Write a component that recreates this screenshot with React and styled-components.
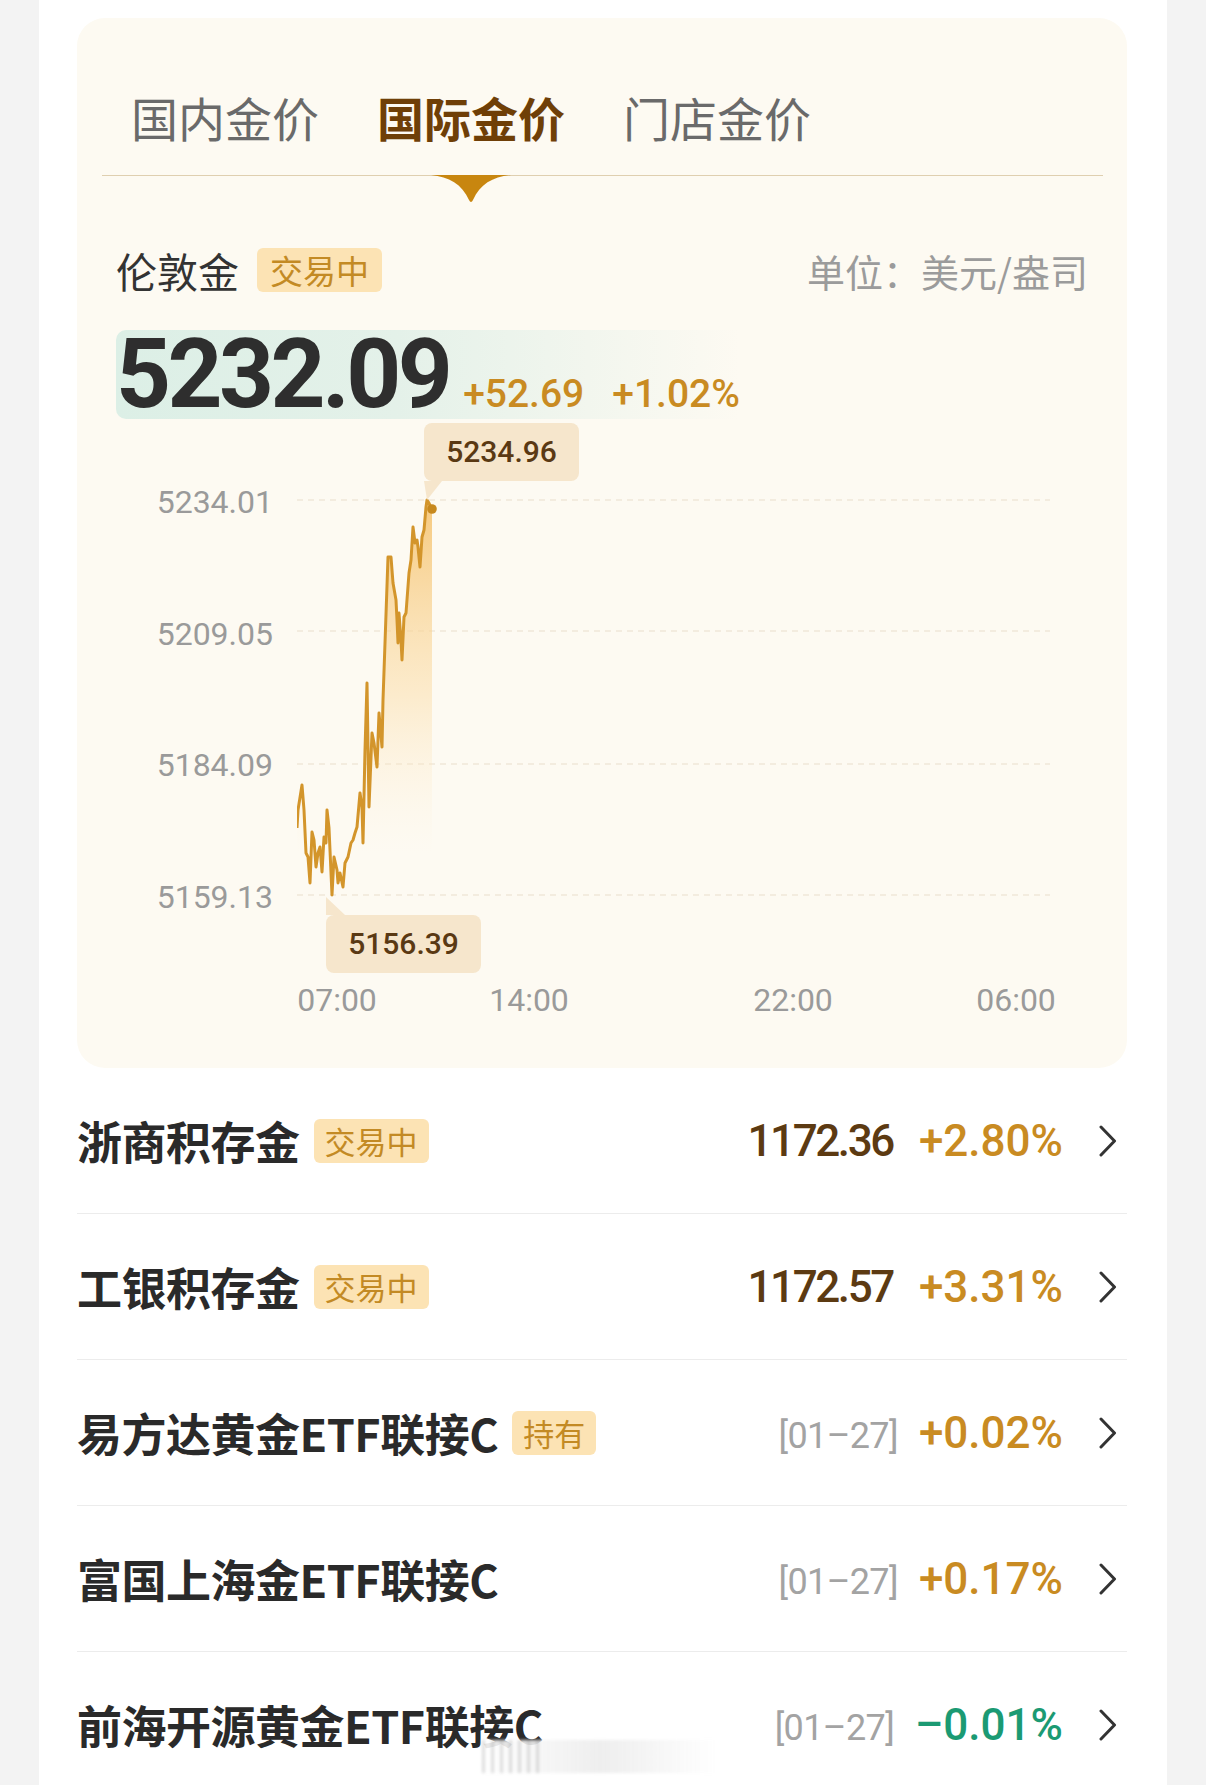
import React from 'react'
import styled, { createGlobalStyle } from 'styled-components'

const GlobalStyle = createGlobalStyle`
  html, body {
    margin: 0;
    padding: 0;
    background: #f3f3f3;
  }
  body {
    font-family: Roboto, "Noto Sans CJK SC", sans-serif;
  }
`

const CJK = `"Noto Sans CJK SC", "Noto Sans", sans-serif`
const NUM = `Roboto, "Noto Sans CJK SC", sans-serif`

// chart geometry (page coords -> plot coords)
const PX = 297
const PY = 419
const PLOT_W = 753
const PLOT_H = 560

const raw = [
  [297, 828], [298, 810], [302, 785], [304, 810], [306, 853], [308, 857], [310, 883],
  [312, 832], [314, 840], [316, 867], [318, 853], [320, 847], [322, 872], [324, 837],
  [326, 843], [327, 810], [329, 828], [332, 895], [334, 857], [337, 870], [338, 883],
  [340, 873], [343, 887], [345, 863], [348, 857], [351, 843], [353, 840], [355, 833],
  [357, 827], [360, 793], [362, 807], [363, 843], [365, 750], [367, 683], [369, 807],
  [372, 733], [374, 743], [377, 767], [379, 713], [382, 747], [383, 700], [385, 643],
  [388, 557], [391, 557], [393, 583], [396, 600], [397, 620], [398, 643], [399, 613],
  [401, 640], [402, 660], [404, 617], [406, 613], [409, 573], [411, 560], [413, 527],
  [415, 543], [417, 540], [418, 547], [420, 567], [422, 537], [424, 530], [426, 507],
  [427, 500], [429, 503], [432, 510],
]
const pts = raw.map(([x, y]) => [x - PX, y - PY])
const linePath = pts.map(([x, y], i) => `${i ? 'L' : 'M'}${x} ${y}`).join(' ')
const last = pts[pts.length - 1]
const fillPath = `${linePath} L${last[0]} 440 L${pts[0][0]} 440 Z`
const gridY = [81, 212, 345, 476]

const yLabels = ['5234.01', '5209.05', '5184.09', '5159.13']
const xLabels = [
  { t: '07:00', x: 40 },
  { t: '14:00', x: 232 },
  { t: '22:00', x: 496 },
  { t: '06:00', x: 719 },
]

const rows = [
  { name: '浙商积存金', tag: '交易中', value: '1172.36', change: '+2.80%' },
  { name: '工银积存金', tag: '交易中', value: '1172.57', change: '+3.31%' },
  { name: '易方达黄金ETF联接C', tag: '持有', date: '[01–27]', change: '+0.02%' },
  { name: '富国上海金ETF联接C', date: '[01–27]', change: '+0.17%' },
  { name: '前海开源黄金ETF联接C', date: '[01–27]', change: '–0.01%', down: true },
]

const Page = styled.div`
  width: 1206px;
  height: 1785px;
  overflow: hidden;
  background: #f3f3f3;
  display: flex;
  justify-content: center;
`

const Panel = styled.main`
  position: relative;
  width: 1128px;
  box-sizing: border-box;
  padding: 18px 40px 0 38px;
  background: #fff;
`

const Card = styled.section`
  background: #fdfaf2;
  border-radius: 28px;
  padding-bottom: 47px;
`

const TabBar = styled.nav`
  height: 158px;
  margin: 0 24px 0 25px;
  box-sizing: border-box;
  padding: 0 0 35px 29px;
  border-bottom: 1px solid #dfcfb0;
  display: flex;
  align-items: flex-end;
  gap: 58px;
`

const Tab = styled.div`
  position: relative;
  font-family: ${CJK};
  font-size: 47px;
  line-height: 47px;
  font-weight: ${(p) => (p.$active ? 700 : 400)};
  color: ${(p) => (p.$active ? '#6f3f07' : '#6a6a6a')};
`

const Pointer = styled.svg`
  position: absolute;
  left: 50%;
  top: calc(100% + 35px);
  transform: translateX(-50%);
`

const Body = styled.div`
  padding: 0 39px;
`

const Header = styled.div`
  margin-top: 72px;
  height: 44px;
  display: flex;
  align-items: center;
`

const Name = styled.span`
  font-family: ${CJK};
  font-size: 41px;
  color: #333;
`

const Tag = styled.span`
  margin-left: ${(p) => p.$gap}px;
  height: 44px;
  line-height: 44px;
  padding: 0 ${(p) => (p.$big ? 13 : 11)}px;
  border-radius: 6px;
  background: #fce3b4;
  color: #c38a24;
  font-family: ${CJK};
  font-size: ${(p) => (p.$big ? 33 : 31)}px;
  font-weight: 400;
`

const Unit = styled.span`
  margin-left: auto;
  font-family: ${CJK};
  font-size: 38px;
  color: #9b9b9b;
`

const PriceBar = styled.div`
  margin-top: 38px;
  width: 624px;
  height: 89px;
  display: flex;
  align-items: baseline;
  border-radius: 10px 0 0 10px;
  background: linear-gradient(90deg, #dcefe6 0%, #e4f1e9 45%, rgba(253, 250, 242, 0) 100%);
`

const Price = styled.span`
  font-family: ${NUM};
  font-size: 96px;
  line-height: 89px;
  font-weight: 700;
  letter-spacing: -3.6px;
  color: #2e2e2e;
`

const Delta = styled.span`
  margin-left: ${(p) => p.$gap}px;
  font-family: ${NUM};
  font-size: 39px;
  font-weight: 500;
  color: #c98b22;
`

const Chart = styled.div`
  display: flex;
`

const YAxis = styled.div`
  width: 157px;
  padding-top: 18px;
  display: flex;
  flex-direction: column;
`

const YLabel = styled.span`
  height: 131.67px;
  line-height: 131.67px;
  text-align: right;
  font-family: ${NUM};
  font-size: 32px;
  color: #9a9a9a;
`

const PlotCol = styled.div`
  margin-left: 24px;
  width: ${PLOT_W}px;
`

const Plot = styled.div`
  position: relative;
  height: ${PLOT_H}px;
  svg {
    display: block;
  }
`

const Tip = styled.div`
  position: absolute;
  left: ${(p) => p.$x}px;
  top: ${(p) => p.$y}px;
  width: 155px;
  height: 58px;
  line-height: 58px;
  text-align: center;
  border-radius: 8px;
  background: #f6e6cc;
  color: #5a3913;
  font-family: ${NUM};
  font-size: 30px;
  font-weight: 500;
`

const XAxis = styled.div`
  position: relative;
  height: 42px;
`

const XLabel = styled.span`
  position: absolute;
  left: ${(p) => p.$x}px;
  transform: translateX(-50%);
  line-height: 42px;
  font-family: ${NUM};
  font-size: 32px;
  color: #9a9a9a;
`

const List = styled.ul`
  list-style: none;
  margin: 0;
  padding: 0;
`

const Row = styled.li`
  height: 146px;
  box-sizing: border-box;
  padding-right: 10px;
  border-bottom: 1px solid #ececec;
  display: flex;
  align-items: center;
`

const Title = styled.span`
  font-family: ${CJK};
  font-size: 45px;
  font-weight: 700;
  letter-spacing: -0.5px;
  color: #2a2a2a;
`

const Right = styled.div`
  margin-left: auto;
  display: flex;
  align-items: baseline;
`

const Value = styled.span`
  font-family: ${NUM};
  font-size: 44px;
  font-weight: 500;
  letter-spacing: -2.4px;
  color: #5c3a12;
`

const DateText = styled.span`
  font-family: ${NUM};
  font-size: 36px;
  letter-spacing: -0.6px;
  color: #a3a3a3;
`

const Change = styled.span`
  margin-left: ${(p) => p.$gap}px;
  font-family: ${NUM};
  font-size: 44px;
  font-weight: 500;
  color: ${(p) => (p.$down ? '#1b9a73' : '#c98b22')};
`

const Chevron = styled.svg`
  margin-left: 36px;
  flex: none;
`

const Watermark = styled.div`
  position: absolute;
  left: 443px;
  top: 1740px;
  width: 236px;
  height: 33px;
  background:
    repeating-linear-gradient(90deg, rgba(160, 160, 160, 0.35) 0 3px, transparent 3px 9px) 0 0 / 60px 100% no-repeat,
    linear-gradient(90deg, rgba(255, 255, 255, 0.9), rgba(235, 235, 235, 0.85) 50%, rgba(255, 255, 255, 0.9));
  filter: blur(1.5px);
`

const PriceChart = () => (
  <Chart>
    <YAxis>
      {yLabels.map((l) => (
        <YLabel key={l}>{l}</YLabel>
      ))}
    </YAxis>
    <PlotCol>
      <Plot>
        <svg width={PLOT_W} height={PLOT_H} viewBox={`0 0 ${PLOT_W} ${PLOT_H}`}>
          <defs>
            <linearGradient id="goldFill" x1="0" y1="81" x2="0" y2="435" gradientUnits="userSpaceOnUse">
              <stop offset="0" stopColor="#f5c370" stopOpacity="0.9" />
              <stop offset="0.55" stopColor="#fbdca6" stopOpacity="0.5" />
              <stop offset="1" stopColor="#fdf0d8" stopOpacity="0" />
            </linearGradient>
          </defs>
          {gridY.map((y) => (
            <line key={y} x1="0" x2={PLOT_W} y1={y} y2={y} stroke="#efe7d9" strokeWidth="1.5" strokeDasharray="6 5" />
          ))}
          <path d={fillPath} fill="url(#goldFill)" />
          <path d={linePath} fill="none" stroke="#d3952b" strokeWidth="3" strokeLinejoin="round" />
          <circle cx={last[0]} cy={last[1] - 1} r="4.8" fill="#c7891f" />
          <polygon points="127,62 145,62 130,81" fill="#f6e6cc" />
          <polygon points="29,478 29,496 48,496" fill="#f6e6cc" />
        </svg>
        <Tip $x={127} $y={4}>5234.96</Tip>
        <Tip $x={29} $y={496}>5156.39</Tip>
      </Plot>
      <XAxis>
        {xLabels.map((l) => (
          <XLabel key={l.t} $x={l.x}>{l.t}</XLabel>
        ))}
      </XAxis>
    </PlotCol>
  </Chart>
)

const App = () => {
  return (
    <>
      <GlobalStyle />
      <Page>
        <Panel>
          <Card>
            <TabBar>
              <Tab>国内金价</Tab>
              <Tab $active>
                国际金价
                <Pointer width="80" height="28" viewBox="0 0 80 28">
                  <path d="M0 0 H80 C62 2 49 9 42 25 Q40 29 38 25 C31 9 18 2 0 0 Z" fill="#c8860f" />
                </Pointer>
              </Tab>
              <Tab>门店金价</Tab>
            </TabBar>
            <Body>
              <Header>
                <Name>伦敦金</Name>
                <Tag $gap={18} $big>交易中</Tag>
                <Unit>单位：美元/盎司</Unit>
              </Header>
              <PriceBar>
                <Price>5232.09</Price>
                <Delta $gap={14}>+52.69</Delta>
                <Delta $gap={28}>+1.02%</Delta>
              </PriceBar>
              <PriceChart />
            </Body>
          </Card>
          <List>
            {rows.map((r) => (
              <Row key={r.name}>
                <Title>{r.name}</Title>
                {r.tag && <Tag $gap={14}>{r.tag}</Tag>}
                <Right>
                  {r.value ? <Value>{r.value}</Value> : <DateText>{r.date}</DateText>}
                  <Change $gap={r.value ? 26 : 21} $down={r.down}>{r.change}</Change>
                </Right>
                <Chevron width="18" height="32" viewBox="0 0 18 32">
                  <polyline points="2,2 15.5,16 2,30" fill="none" stroke="#333" strokeWidth="3" strokeLinecap="round" strokeLinejoin="round" />
                </Chevron>
              </Row>
            ))}
          </List>
          <Watermark />
        </Panel>
      </Page>
    </>
  )
}

export default App
